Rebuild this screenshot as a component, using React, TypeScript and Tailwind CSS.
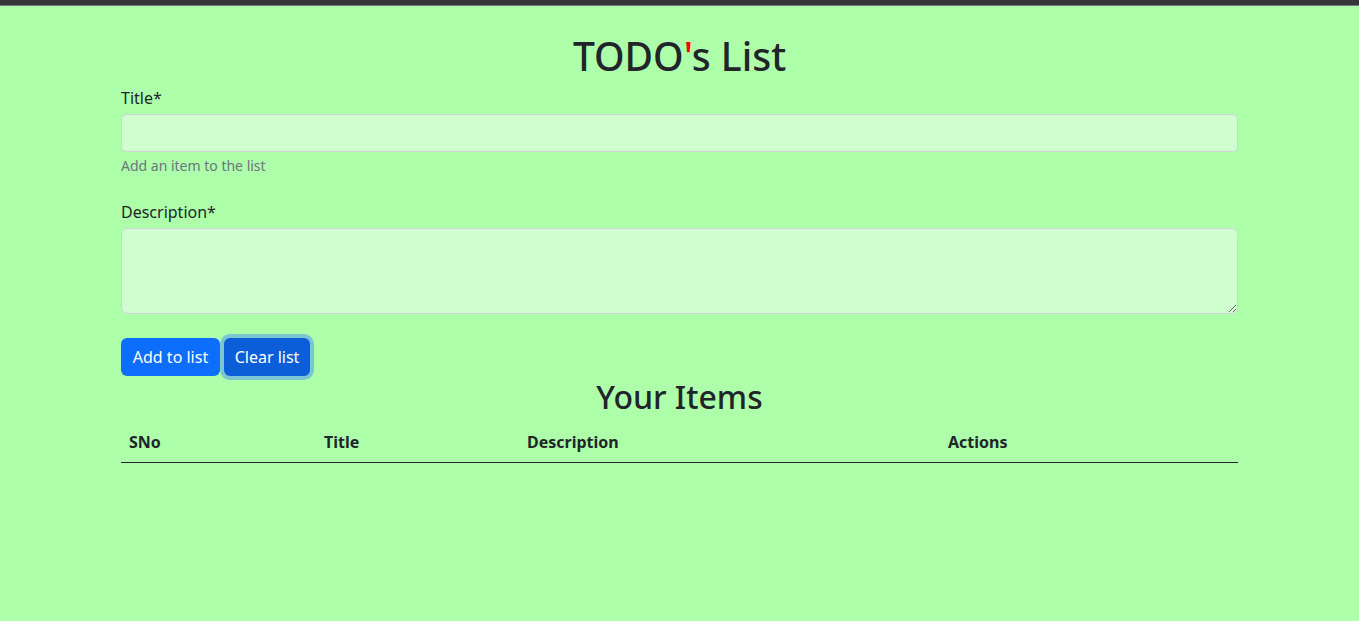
const font = { fontFamily: '"Noto Sans", "Open Sans", sans-serif' };

export default function App() {
  return (
    <div className="min-h-[621px] bg-[#adffa9] text-[#212529]" style={font}>
      <div className="h-[5px] bg-[#35363a]" />
      <div className="h-px bg-[#7a7a7a]" />
      <div className="mx-auto w-[1117px]">
        <h1 className="mt-[26px] text-center text-[39px] leading-[48px] font-medium">
          TODO<span className="text-[#ff0000]">'</span>s List
        </h1>
        <div className="mt-[6px]">
          <label className="block text-base leading-6 mb-1">Title*</label>
          <input
            type="text"
            className="block w-full h-[38px] rounded-[6px] border border-[#ced4da] bg-[#d0ffd0] px-3 outline-none"
          />
          <div className="mt-[3px] text-[14px] leading-[21px] text-[#6c757d]">Add an item to the list</div>
        </div>
        <div className="mt-[24px]">
          <label className="block text-base leading-6 mb-1">Description*</label>
          <textarea
            rows={3}
            className="block w-full h-[86px] rounded-[6px] border border-[#ced4da] bg-[#d0ffd0] px-3 py-[6px] outline-none"
          />
        </div>
        <div className="mt-6 flex gap-1">
          <button className="h-[38px] w-[99px] rounded-[6px] bg-[#0d6efd] text-white text-base">Add to list</button>
          <button className="h-[38px] w-[86px] rounded-[6px] bg-[#0b5ed7] text-white text-base shadow-[0_0_0_4px_#7ac6d2]">
            Clear list
          </button>
        </div>
        <h2 className="mt-[2px] text-center text-[32px] leading-[38px] font-medium">Your Items</h2>
        <table className="mt-[6px] w-full text-left border-collapse">
          <thead>
            <tr className="border-b border-[#212529]">
              <th className="w-[195px] px-2 py-2 font-bold leading-6">SNo</th>
              <th className="w-[203px] px-2 py-2 font-bold leading-6">Title</th>
              <th className="w-[421px] px-2 py-2 font-bold leading-6">Description</th>
              <th className="px-2 py-2 font-bold leading-6">Actions</th>
            </tr>
          </thead>
          <tbody />
        </table>
      </div>
    </div>
  );
}
